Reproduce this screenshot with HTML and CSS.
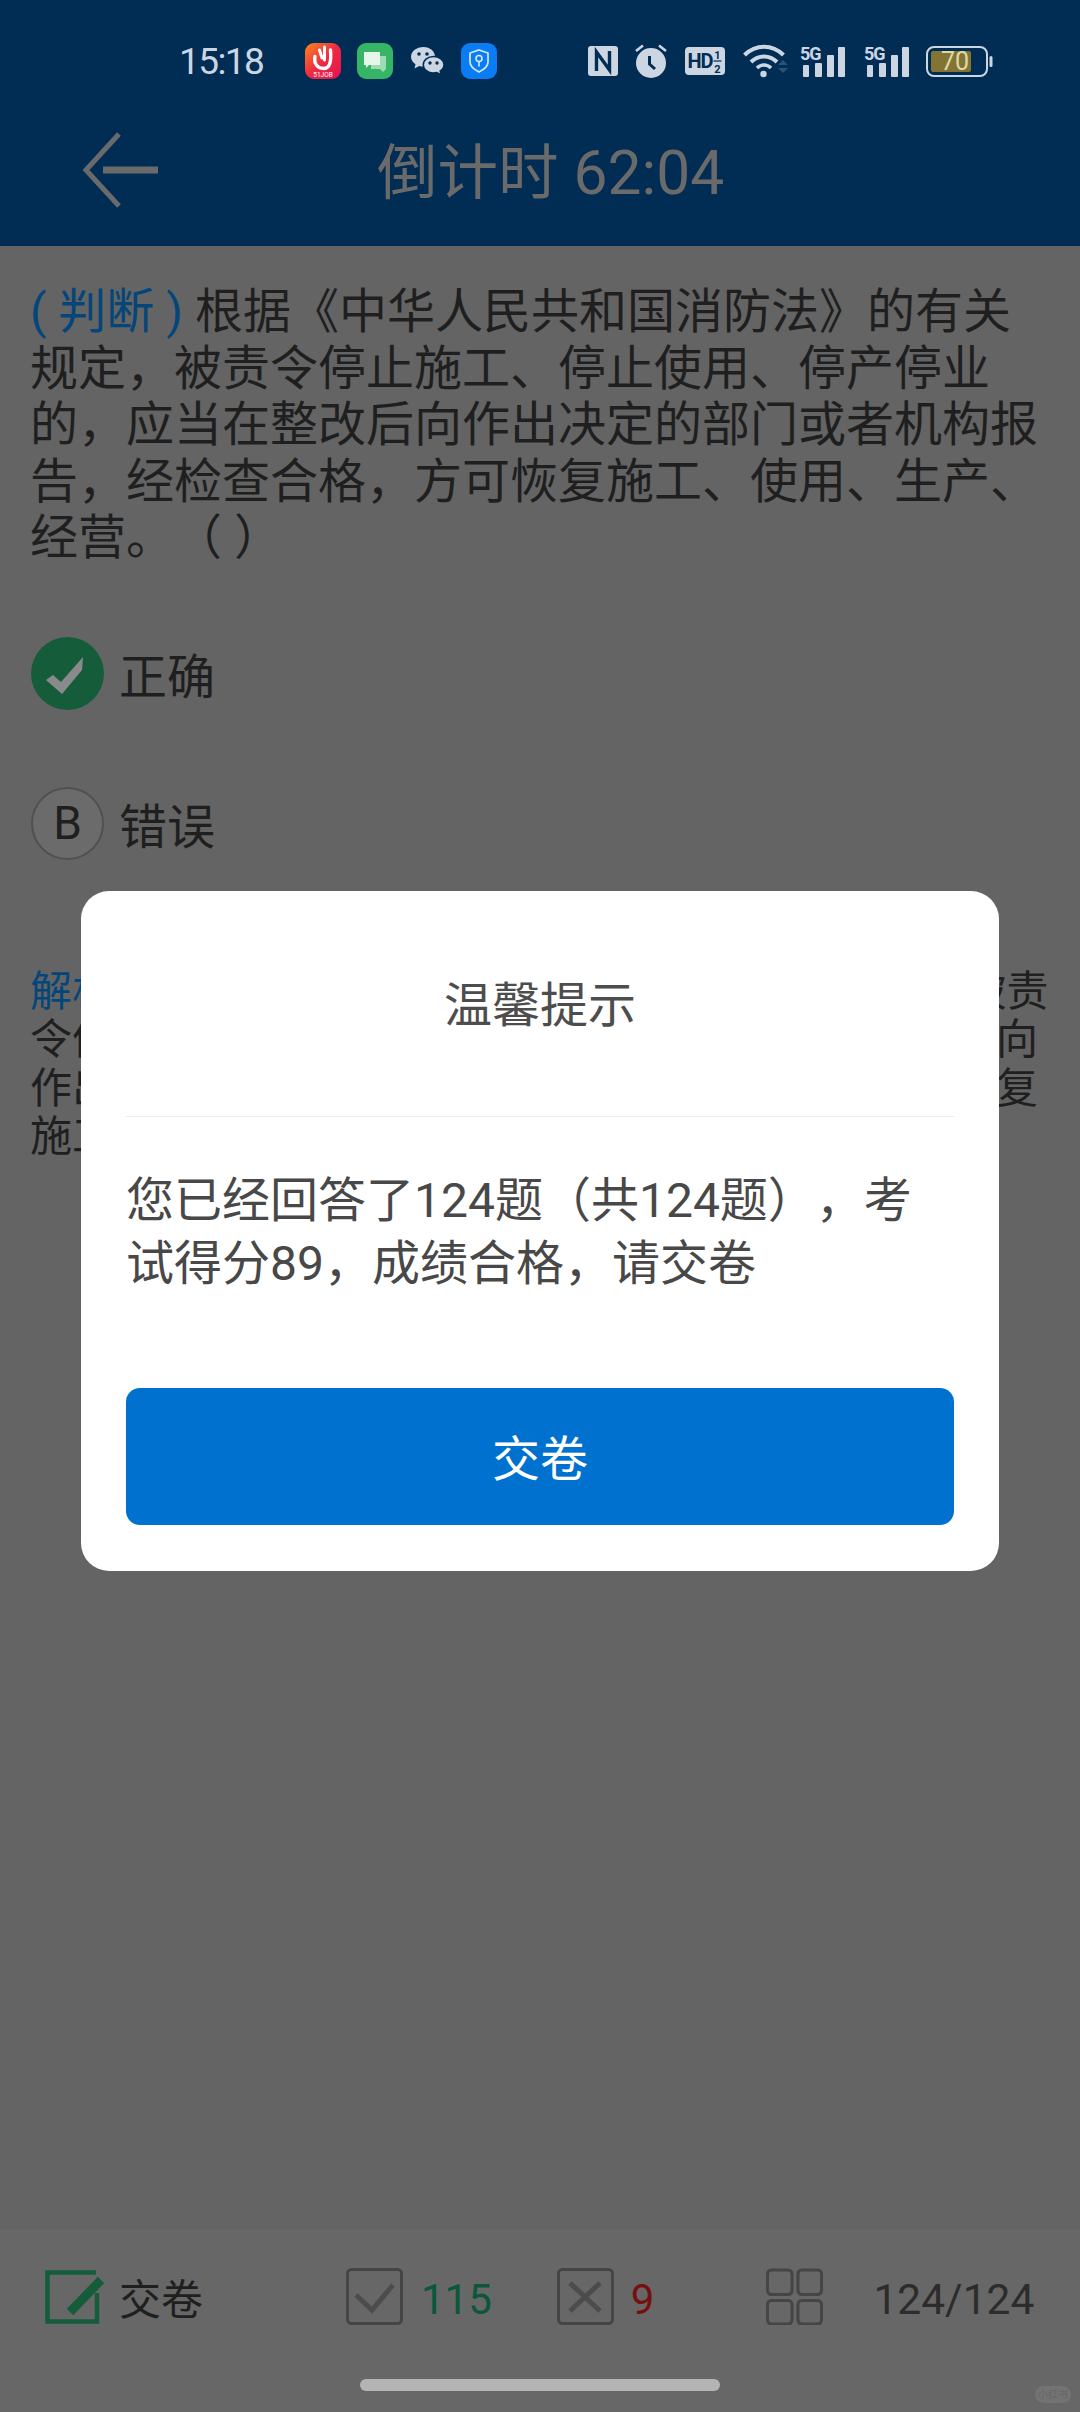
FILE: index.html
```html
<!DOCTYPE html>
<html lang="zh-CN">
<head>
<meta charset="utf-8">
<title>倒计时</title>
<link rel="stylesheet" href="styles.css">
</head>
<body>
<div class="app">
  <header class="header">
    <div class="status">
      <span class="time">15:18</span>
      <svg class="ic job" viewBox="0 0 36 36"><defs><linearGradient id="jobg" x1="0" y1="0" x2="1" y2="1"><stop offset="0" stop-color="#f98a1c"/><stop offset=".5" stop-color="#ee2a44"/><stop offset="1" stop-color="#e4124f"/></linearGradient></defs><rect width="36" height="36" rx="9" fill="url(#jobg)"/><path d="M10 13.500C8.500 21 13 25.500 18.500 25.500C24.500 25.500 26.500 20 25.500 7" fill="none" stroke="#fff" stroke-width="3.400" stroke-linecap="round"/><path d="M19.500 4V17M14.500 7L17 15" stroke="#fff" stroke-width="3" stroke-linecap="round"/><text x="18" y="34" class="job-t">51JOB</text></svg>
      <svg class="ic msg" viewBox="0 0 36 36"><rect width="36" height="36" rx="9" fill="#35b565"/><path d="M14 13H29V26L26 29L23 26H14Z" fill="#9fdcb4"/><path d="M7 9H23V22H12L9 25V22H7Z" fill="#e6f6ea"/></svg>
      <svg class="ic wx" viewBox="0 0 33 28"><path d="M12.500 0C5.600 0 0 4.300 0 9.800C0 13 1.900 15.500 4.500 17.200L3.500 21.500L8.200 19C9.500 19.400 11 19.500 12.500 19.500C19 19.500 24 15 24 9.800C24 4.300 19 0 12.500 0Z" fill="#ccd6e2"/><path d="M22.500 9.500C16.800 9.500 12.300 13.200 12.300 17.800C12.300 22.400 16.800 26 22.500 26C23.700 26 24.800 25.900 25.800 25.500L30 28L29.200 24C31.500 22.500 33 20.300 33 17.800C33 13.200 28.200 9.500 22.500 9.500Z" fill="#ccd6e2" stroke="#012d55" stroke-width="1.500"/><circle cx="8" cy="7" r="1.800" fill="#012d55"/><circle cx="16" cy="7" r="1.800" fill="#012d55"/><circle cx="19" cy="16" r="1.700" fill="#012d55"/><circle cx="26" cy="16" r="1.700" fill="#012d55"/></svg>
      <svg class="ic shield" viewBox="0 0 36 36"><rect width="36" height="36" rx="9" fill="#0a7cf4"/><path d="M18 7L27 10V19C27 23.500 23 26.500 18 29C13 26.500 9 23.500 9 19V10Z" fill="none" stroke="#d6e8fd" stroke-width="1.700"/><circle cx="18" cy="15.500" r="3" fill="none" stroke="#d6e8fd" stroke-width="1.600"/><path d="M18 18.500V23.500" stroke="#d6e8fd" stroke-width="1.600"/></svg>
      <svg class="ic nfc" viewBox="0 0 30 30"><rect width="30" height="30" rx="3" fill="#ccd6e2"/><path d="M8.500 25V6L21.500 24V5" fill="none" stroke="#012d55" stroke-width="3.400"/></svg>
      <svg class="ic alarm" viewBox="0 0 32 34"><circle cx="16" cy="19" r="15" fill="#ccd6e2"/><path d="M1 7L8 1.500M31 7L24 1.500" stroke="#ccd6e2" stroke-width="2.600"/><path d="M14.500 12V20L20 25" fill="none" stroke="#012d55" stroke-width="3"/></svg>
      <svg class="ic hd" viewBox="0 0 40 28"><rect width="40" height="28" rx="4" fill="#ccd6e2"/><text x="2.500" y="21" class="hd-t">HD</text><text x="32.500" y="12" class="hd-s">1</text><text x="32.500" y="25.500" class="hd-s">2</text><path d="M28.500 14H36.500" stroke="#012d55" stroke-width="1.200"/></svg>
      <svg class="ic wifi" viewBox="0 0 45 34"><path d="M1.500 11C13 0 29 0 40.500 11" fill="none" stroke="#ccd6e2" stroke-width="4"/><path d="M8 18C15.500 10.500 26.500 10.500 34 18" fill="none" stroke="#ccd6e2" stroke-width="4"/><path d="M14 24C18 20 24 20 28 24" fill="none" stroke="#ccd6e2" stroke-width="3.600"/><circle cx="20.500" cy="30" r="3.200" fill="#ccd6e2"/><path d="M35 21H45L40 16ZM35 24H45L40 29Z" fill="#2b5277"/></svg>
      <svg class="ic sig" viewBox="0 0 47 31"><text x="0" y="14" class="sig-t">5G</text><rect x="3" y="19" width="6" height="12" rx="1" fill="#ccd6e2"/><rect x="15" y="17" width="7" height="14" rx="1" fill="#ccd6e2"/><rect x="27" y="9" width="7" height="22" rx="1" fill="#ccd6e2"/><rect x="38" y="1" width="7" height="30" rx="1" fill="#ccd6e2"/></svg>
      <svg class="ic sig sig2" viewBox="0 0 47 31"><text x="0" y="14" class="sig-t">5G</text><rect x="3" y="19" width="6" height="12" rx="1" fill="#ccd6e2"/><rect x="15" y="17" width="7" height="14" rx="1" fill="#ccd6e2"/><rect x="27" y="9" width="7" height="22" rx="1" fill="#ccd6e2"/><rect x="38" y="1" width="7" height="30" rx="1" fill="#ccd6e2"/></svg>
      <svg class="ic batt" viewBox="0 0 67 31"><rect x="1" y="1" width="60" height="29" rx="7" fill="none" stroke="#ccd6e2" stroke-width="2"/><rect x="5" y="5" width="40" height="21" rx="2" fill="#837433"/><rect x="63.500" y="10" width="3" height="11" rx="1.500" fill="#ccd6e2"/><text x="29" y="24" class="batt-t">70</text></svg>
    </div>
    <div class="nav">
      <svg class="back" viewBox="0 0 76 76"><path d="M36 2L3 38L36 74" fill="none" stroke="#6a6a6a" stroke-width="5"/><path d="M20 38H75" stroke="#6a6a6a" stroke-width="7"/></svg>
      <h1 class="title">倒计时 62:04</h1>
    </div>
  </header>

  <main class="content">
    <p class="question"><span class="tag">( 判断 )</span> 根据《中华人民共和国消防法》的有关规定，被责令停止施工、停止使用、停产停业的，应当在整改后向作出决定的部门或者机构报告，经检查合格，方可恢复施工、使用、生产、经营。（ ）</p>
    <div class="option">
      <svg class="mark" viewBox="0 0 73 73"><circle cx="36.500" cy="36.500" r="36.500" fill="#155c3b"/><path d="M15 43L22 38L30 45L52 20L51 33L31 57Z" fill="#8a8a8a"/></svg>
      <span class="opt-text">正确</span>
    </div>
    <div class="option option-b">
      <span class="letter">B</span>
      <span class="opt-text">错误</span>
    </div>
    <p class="analysis"><span class="tag">解析：</span> 根据《中华人民共和国消防法》有关规定，被责令停止施工、停止使用、停产停业的，应当在整改后向作出决定的部门或者机构报告，经检查合格，方可恢复施工、使用、生产、经营。</p>
  </main>

  <footer class="bar">
    <div class="group g-submit">
      <svg class="edit" viewBox="0 0 60 54"><path d="M51 2.500H2.500V51.500H52V23" fill="none" stroke="#155c3b" stroke-width="4.500"/><path d="M25 42L56 10" stroke="#155c3b" stroke-width="9"/></svg>
      <span class="label">交卷</span>
    </div>
    <div class="group g-right">
      <svg class="box" viewBox="0 0 57 57"><rect x="1.500" y="1.500" width="54" height="54" rx="4" fill="none" stroke="#454545" stroke-width="3"/><path d="M10 27L26 42L47 17" fill="none" stroke="#4c4c4c" stroke-width="5"/></svg>
      <span class="num good">115</span>
    </div>
    <div class="group g-wrong">
      <svg class="box" viewBox="0 0 57 57"><rect x="1.500" y="1.500" width="54" height="54" rx="4" fill="none" stroke="#454545" stroke-width="3"/><path d="M13 15L43 43M43 15L13 43" fill="none" stroke="#4c4c4c" stroke-width="5"/></svg>
      <span class="num bad">9</span>
    </div>
    <div class="group g-total">
      <svg class="box" viewBox="0 0 58 57"><g fill="none" stroke="#454545" stroke-width="3"><rect x="1.500" y="1.500" width="25" height="25" rx="4"/><rect x="32.500" y="1.500" width="24" height="25" rx="4"/><rect x="1.500" y="32.500" width="25" height="24" rx="4"/><rect x="32.500" y="32.500" width="24" height="24" rx="4"/></g></svg>
      <span class="num total">124/124</span>
    </div>
  </footer>

  <div class="home"></div>
  <div class="mark-wm">小红书</div>

  <div class="layer">
    <section class="modal">
      <h2 class="modal-title">温馨提示</h2>
      <div class="modal-rule"></div>
      <p class="modal-msg">您已经回答了124题（共124题），考试得分89，成绩合格，请交卷</p>
      <button class="modal-btn">交卷</button>
    </section>
  </div>
</div>
</body>
</html>
```
FILE: styles.css
```css
* { box-sizing: border-box; }
html, body { margin: 0; padding: 0; }
body { font-family: Roboto, "Noto Sans CJK SC", sans-serif; background: #646464; text-spacing-trim: space-all; }
p, h1, h2 { margin: 0; font-weight: 400; }

.app { position: relative; width: 1080px; height: 2412px; display: flex; flex-direction: column; overflow: hidden; background: #646464; }

.header { background: #012d55; height: 246px; flex: none; }
.status { height: 122px; display: flex; align-items: center; padding-left: 179px; }
.time { width: 82px; font-size: 37px; letter-spacing: -1.600px; color: #ccd6e2; white-space: nowrap; }
.ic { display: block; flex: none; overflow: visible; }
.job { width: 36px; height: 36px; margin-left: 44px; }
.msg { width: 36px; height: 36px; margin-left: 16px; }
.wx { width: 33px; height: 28px; margin-left: 18px; }
.shield { width: 36px; height: 36px; margin-left: 17px; }
.nfc { width: 30px; height: 30px; margin-left: 91px; }
.alarm { width: 32px; height: 34px; margin-left: 17px; }
.hd { width: 40px; height: 28px; margin-left: 18px; }
.wifi { width: 45px; height: 34px; margin-left: 18px; }
.sig { width: 47px; height: 31px; margin-left: 12px; }
.sig2 { margin-left: 17px; }
.batt { width: 67px; height: 31px; margin-left: 15px; }
.job-t { font: 6.500px Roboto, sans-serif; fill: #fff; text-anchor: middle; }
.hd-t { font: 700 20px "Liberation Sans Narrow", Roboto, sans-serif; fill: #012d55; letter-spacing: -1px; }
.hd-s { font: 700 11px Roboto, sans-serif; fill: #012d55; text-anchor: middle; }
.sig-t { font: 700 18px Roboto, sans-serif; fill: #ccd6e2; letter-spacing: -1px; }
.batt-t { font: 400 25px Roboto, sans-serif; fill: #ded9a8; text-anchor: middle; }

.nav { height: 124px; display: flex; align-items: flex-start; padding-left: 83px; }
.back { width: 76px; height: 76px; margin-top: 10px; flex: none; }
.title { margin: 16px 0 0 218px; font-size: 60.500px; line-height: 72px; color: #6a6a6a; white-space: nowrap; }

.content { flex: 1; padding: 38px 30px 0; }
.question { font-size: 48px; line-height: 56.600px; color: #1f1f1f; }
.tag { color: #04467a; }
.option { display: flex; align-items: center; height: 73px; margin-top: 70px; }
.option-b { margin-top: 77px; }
.mark { width: 73px; height: 73px; display: block; flex: none; margin-left: 1px; }
.letter { width: 73px; height: 73px; flex: none; margin-left: 1px; border: 2px solid #505050; border-radius: 50%; background: #6b6b6b; color: #1f1f1f; font-size: 46px; display: flex; align-items: center; justify-content: center; }
.opt-text { font-size: 48px; color: #1f1f1f; margin-left: 15px; }
.analysis { margin-top: 108px; font-size: 42px; line-height: 48.500px; color: #1f1f1f; }

.bar { flex: none; height: 183px; background: #676767; padding: 39px 0 0 45px; display: flex; align-items: flex-start; }
.group { display: flex; align-items: center; height: 57px; }
.edit { width: 60px; height: 54px; display: block; flex: none; }
.label { font-size: 42px; color: #1f1f1f; margin-left: 14px; }
.box { width: 57px; height: 57px; display: block; flex: none; }
.num { font-size: 42px; margin-left: 18px; padding-top: 6px; white-space: nowrap; }
.good { color: #0b573a; }
.bad { color: #751010; margin-left: 17px; }
.total { font-size: 42.500px; color: #2c2c2c; margin-left: 50px; }
.g-right { margin-left: 143px; }
.g-wrong { margin-left: 65px; }
.g-total { margin-left: 112px; }

.home { position: absolute; left: 360px; top: 2379px; width: 360px; height: 12px; border-radius: 6px; background: #b4b4b4; }
.mark-wm { position: absolute; left: 1035px; top: 2386px; width: 36px; height: 17px; border-radius: 9px; background: #737373; color: #666; font-size: 10px; line-height: 17px; text-align: center; }

.layer { position: absolute; inset: 0; display: flex; justify-content: center; align-items: flex-start; padding-top: 891px; }
.modal { width: 918px; height: 680px; background: #fff; border-radius: 28px; padding: 0 45px 46px; display: flex; flex-direction: column; }
.modal-title { height: 225px; padding-bottom: 5px; display: flex; align-items: center; justify-content: center; font-size: 48px; color: #4d4d4d; }
.modal-rule { height: 1px; background: #ececec; flex: none; }
.modal-msg { margin-top: 52px; flex: 1; font-size: 48px; line-height: 63px; color: #484848; }
.modal-btn { flex: none; height: 137px; padding: 0 0 4px; border: 0; border-radius: 14px; background: #0071ce; color: #fff; font: 48px Roboto, "Noto Sans CJK SC", sans-serif; }
```
